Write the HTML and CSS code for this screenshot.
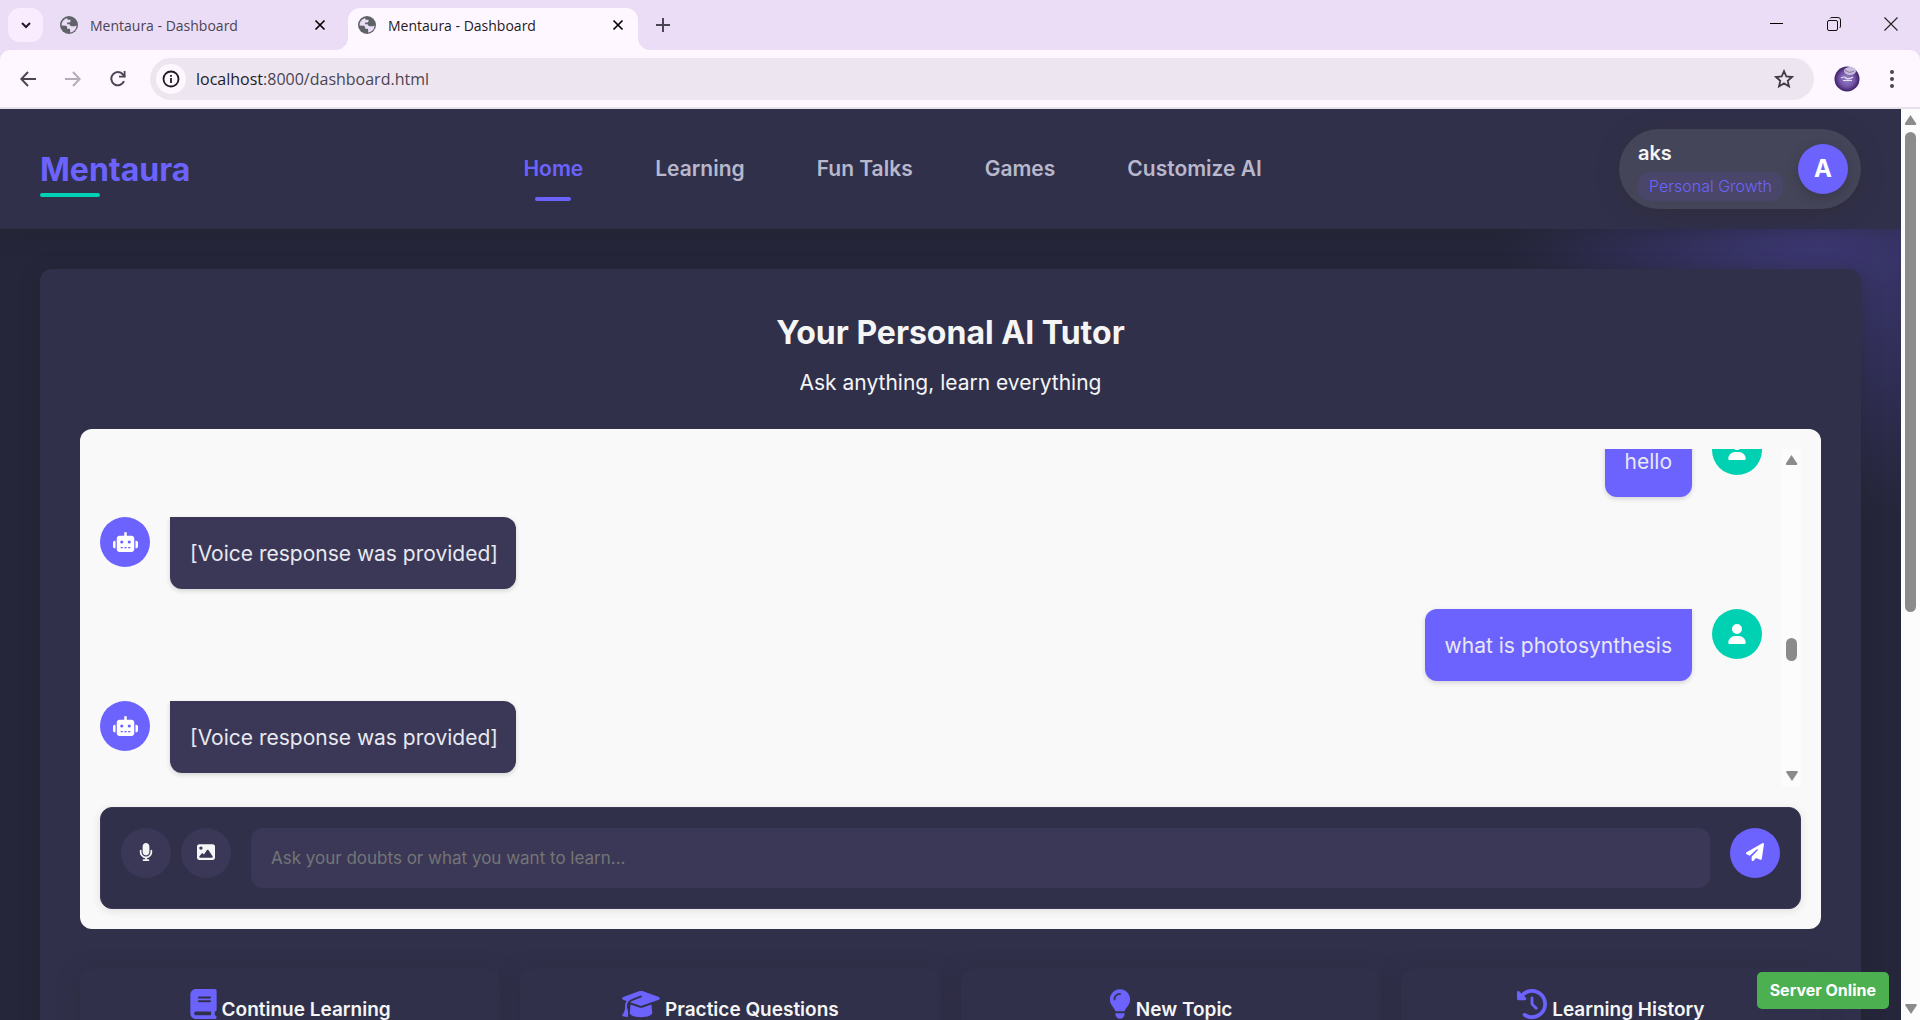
FILE: index.html
```html
<!DOCTYPE html>
<html lang="en">
<head>
<meta charset="utf-8">
<title>Mentaura - Dashboard</title>
<link rel="stylesheet" href="styles.css">
</head>
<body>
<svg class="sprite" aria-hidden="true">
  <symbol id="globe" viewBox="0 0 24 24"><circle cx="12" cy="12" r="12" fill="#5f6368"/><path fill="#ebddf6" d="M9.500 2.500C4.500 4 2 8 2 12.500l5.500.5c1.500.2 2 1 2 2.500v1.500h2.500c1 0 1.500.6 1.500 1.500v3.500c5-.8 8.500-4.500 8.500-9.500l-2 1h-4.500c-1.500 0-2.500-1-2.500-2.500H9.500V8.500h2.500c1.500 0 2-.8 2-2V5h-3c-1 0-1.500-1-1.500-2.500z"/></symbol>
  <symbol id="close" viewBox="0 0 12 12"><path d="M1.500 1.500l9 9M10.500 1.500l-9 9" stroke="currentColor" stroke-width="1.700" fill="none"/></symbol>
  <symbol id="robot" viewBox="0 0 640 512"><path fill="currentColor" d="M320 0c17.700 0 32 14.300 32 32V96H472c39.800 0 72 32.200 72 72V440c0 39.800-32.200 72-72 72H168c-39.800 0-72-32.200-72-72V168c0-39.800 32.200-72 72-72H288V32c0-17.700 14.300-32 32-32zM208 384c-8.800 0-16 7.200-16 16s7.200 16 16 16h32c8.800 0 16-7.200 16-16s-7.200-16-16-16H208zm96 0c-8.800 0-16 7.200-16 16s7.200 16 16 16h32c8.800 0 16-7.200 16-16s-7.200-16-16-16H304zm96 0c-8.800 0-16 7.200-16 16s7.200 16 16 16h32c8.800 0 16-7.200 16-16s-7.200-16-16-16H400zM264 256a40 40 0 1 0 -80 0 40 40 0 1 0 80 0zm152 40a40 40 0 1 0 0-80 40 40 0 1 0 0 80zM48 224H64V416H48c-26.500 0-48-21.500-48-48V272c0-26.500 21.500-48 48-48zm544 0c26.500 0 48 21.500 48 48v96c0 26.500-21.500 48-48 48H576V224h16z"/></symbol>
  <symbol id="user" viewBox="0 0 448 512"><path fill="currentColor" d="M224 256A128 128 0 1 0 224 0a128 128 0 1 0 0 256zm-45.700 48C79.800 304 0 383.800 0 482.300C0 498.700 13.300 512 29.700 512H418.300c16.400 0 29.700-13.300 29.700-29.700C448 383.800 368.200 304 269.700 304H178.300z"/></symbol>
</svg>

<div class="tabstrip">
  <button class="tab-search" aria-label="Search tabs"><svg width="12" height="12" viewBox="0 0 12 12"><path d="M2 4l4 4 4-4" fill="none" stroke="#1f1a24" stroke-width="2"/></svg></button>
  <div class="tab"><svg class="favicon"><use href="#globe"/></svg><span>Mentaura - Dashboard</span><button class="tab-close" aria-label="Close tab"><svg width="12" height="12"><use href="#close"/></svg></button></div>
  <div class="tab tab-active"><svg class="favicon"><use href="#globe"/></svg><span>Mentaura - Dashboard</span><button class="tab-close" aria-label="Close tab"><svg width="12" height="12"><use href="#close"/></svg></button></div>
  <button class="new-tab" aria-label="New tab"><svg width="14" height="14" viewBox="0 0 14 14"><path d="M7 0v14M0 7h14" stroke="#4a4453" stroke-width="2"/></svg></button>
  <div class="window-controls">
    <button aria-label="Minimize"><svg width="14" height="14" viewBox="0 0 14 14"><path d="M0 6.500h13" stroke="#000"/></svg></button>
    <button aria-label="Restore"><svg width="14" height="14" viewBox="0 0 14 14" fill="none" stroke="#111"><rect x=".5" y="3.500" width="10" height="10" rx="1.500"/><path d="M3 1.500q.5-1 2-1h6q2.500 0 2.500 2.500v6q0 1.500-1 2"/></svg></button>
    <button aria-label="Close"><svg width="14" height="14" viewBox="0 0 14 14"><path d="M.5.5l13 13M13.500.5L.5 13.500" stroke="#222" stroke-width="1.100"/></svg></button>
  </div>
</div>

<div class="toolbar">
  <button class="tool" aria-label="Back"><svg width="16" height="16" viewBox="0 0 16 16"><path d="M16 8H1.500M8 1L1.300 8 8 15" fill="none" stroke="#4a4453" stroke-width="2"/></svg></button>
  <button class="tool" aria-label="Forward"><svg width="16" height="16" viewBox="0 0 16 16"><path d="M0 8h14.500M8 1l6.700 7L8 15" fill="none" stroke="#b3adb9" stroke-width="2"/></svg></button>
  <button class="tool" aria-label="Reload"><svg width="16" height="16" viewBox="0 0 16 16"><path d="M14 10.200A6.600 6.600 0 1 1 13 3.500L15 6" fill="none" stroke="#4a4453" stroke-width="2"/><path d="M15.500 0v6.500H9V4.700h4.700V0z" fill="#4a4453"/></svg></button>
  <div class="omnibox">
    <button class="site-info" aria-label="Site information"><svg width="18" height="18" viewBox="0 0 18 18"><circle cx="9" cy="9" r="7.500" fill="none" stroke="#1f1a24" stroke-width="1.800"/><path d="M9 8v5M9 5v1.800" stroke="#1f1a24" stroke-width="1.800"/></svg></button>
    <a class="url" href="#">localhost<span>:8000/dashboard.html</span></a>
    <button class="star" aria-label="Bookmark"><svg width="20" height="20" viewBox="0 0 20 20"><path d="M10 2.200l2.300 5.300 5.700.5-4.300 3.800 1.300 5.600-5-3-5 3 1.300-5.600L2 8l5.700-.5z" fill="none" stroke="#3f3a46" stroke-width="1.800"/></svg></button>
  </div>
  <svg class="account" width="26" height="26" viewBox="0 0 26 26"><defs><radialGradient id="acc"><stop offset="0" stop-color="#9a86c8"/><stop offset=".6" stop-color="#7656aa"/><stop offset="1" stop-color="#3c1f66"/></radialGradient></defs><circle cx="13" cy="13" r="12.500" fill="url(#acc)"/><ellipse cx="16" cy="5" rx="6" ry="4" fill="#c9bfdc"/><path d="M11 4q4 4 9 1" stroke="#7d6c9c" fill="none"/><path d="M7 12q3-2 5 0t7-1M9 14.500h9" stroke="#e8e0f4" stroke-width="1.200" fill="none"/></svg>
  <button class="tool menu" aria-label="Menu"><svg width="4" height="18" viewBox="0 0 4 18" fill="#4a4453"><circle cx="2" cy="2" r="2"/><circle cx="2" cy="9" r="2"/><circle cx="2" cy="16" r="2"/></svg></button>
</div>

<div class="viewport">
  <div class="page">
    <header class="header">
      <a class="logo" href="#">Mentaura</a>
      <nav class="nav">
        <a class="active" href="#">Home</a><a href="#">Learning</a><a href="#">Fun Talks</a><a href="#">Games</a><a href="#">Customize AI</a>
      </nav>
      <div class="profile">
        <div class="profile-info"><span class="profile-name">aks</span><span class="profile-tag">Personal Growth</span></div>
        <div class="profile-avatar">A</div>
      </div>
    </header>

    <main class="main">
      <section class="tutor">
        <h1>Your Personal AI Tutor</h1>
        <p class="subtitle">Ask anything, learn everything</p>

        <div class="chat">
          <div class="chat-scroll">
            <div class="messages">
              <div class="message user"><div class="avatar"><svg width="18" height="20"><use href="#user"/></svg></div><div class="bubble">hello</div></div>
              <div class="message bot"><div class="avatar"><svg width="25" height="20"><use href="#robot"/></svg></div><div class="bubble">[Voice response was provided]</div></div>
              <div class="message user"><div class="avatar"><svg width="18" height="20"><use href="#user"/></svg></div><div class="bubble">what is photosynthesis</div></div>
              <div class="message bot"><div class="avatar"><svg width="25" height="20"><use href="#robot"/></svg></div><div class="bubble">[Voice response was provided]</div></div>
            </div>
            <div class="scrollbar chat-bar"><i class="arrow up"></i><i class="thumb"></i><i class="arrow down"></i></div>
          </div>
          <form class="composer">
            <button type="button" class="round" aria-label="Record voice"><svg width="14" height="18" viewBox="0 0 384 512"><path fill="currentColor" d="M192 0C139 0 96 43 96 96V256c0 53 43 96 96 96s96-43 96-96V96c0-53-43-96-96-96zM64 216c0-13.300-10.700-24-24-24s-24 10.700-24 24v40c0 89.100 66.200 162.700 152 174.400V464H120c-13.300 0-24 10.700-24 24s10.700 24 24 24h72 72c13.300 0 24-10.700 24-24s-10.700-24-24-24H216V430.400c85.800-11.700 152-85.300 152-174.400V216c0-13.300-10.700-24-24-24s-24 10.700-24 24v40c0 70.700-57.300 128-128 128s-128-57.300-128-128V216z"/></svg></button>
            <button type="button" class="round" aria-label="Upload image"><svg width="18" height="18" viewBox="0 0 512 512"><path fill="currentColor" d="M0 96C0 60.700 28.700 32 64 32H448c35.300 0 64 28.700 64 64V416c0 35.300-28.700 64-64 64H64c-35.300 0-64-28.700-64-64V96zM323.800 202.500c-4.500-6.600-11.900-10.500-19.800-10.500s-15.400 3.900-19.800 10.500l-87 127.600L170.700 297c-4.600-5.700-11.500-9-18.700-9s-14.200 3.300-18.700 9l-64 80c-5.800 7.200-6.900 17.100-2.900 25.400s12.400 13.600 21.600 13.600h96 32H424c8.900 0 17.100-4.900 21.200-12.800s3.600-17.400-1.400-24.700l-120-176zM112 192a48 48 0 1 0 0-96 48 48 0 1 0 0 96z"/></svg></button>
            <input type="text" aria-label="Question" placeholder="Ask your doubts or what you want to learn...">
            <button type="button" class="round send" aria-label="Send"><svg width="18" height="18" viewBox="0 0 512 512"><path fill="currentColor" d="M498.100 5.600c10.100 7 15.400 19.100 13.500 31.200l-64 416c-1.500 9.700-7.400 18.200-16 23s-18.900 5.400-28 1.600L284 427.700l-68.500 74.100c-8.900 9.700-22.900 12.900-35.200 8.100S160 493.200 160 480V396.400c0-4 1.500-7.800 4.200-10.700L331.800 202.800c5.800-6.300 5.600-16-.4-22s-15.700-6.400-22-.7L106 360.800 17.700 316.600C7.100 311.300 .3 300.700 0 288.900s5.900-22.800 16.100-28.700l448-256c10.700-6.100 23.900-5.500 34 1.400z"/></svg></button>
          </form>
        </div>

        <div class="cards">
          <article class="card"><h2><svg width="27" height="30" viewBox="0 0 448 512"><path fill="#6c63ff" d="M96 0C43 0 0 43 0 96V416c0 53 43 96 96 96H384h32c17.700 0 32-14.300 32-32s-14.300-32-32-32V384c17.700 0 32-14.300 32-32V32c0-17.700-14.300-32-32-32H384 96zm0 384H352v64H96c-17.700 0-32-14.300-32-32s14.300-32 32-32zm32-240c0-8.800 7.200-16 16-16H336c8.800 0 16 7.200 16 16s-7.200 16-16 16H144c-8.800 0-16-7.200-16-16zm16 48H336c8.800 0 16 7.200 16 16s-7.200 16-16 16H144c-8.800 0-16-7.200-16-16s7.200-16 16-16z"/></svg><span>Continue Learning</span></h2></article>
          <article class="card"><h2><svg width="38" height="30" viewBox="0 0 640 512"><path fill="#6c63ff" d="M320 32c-8.100 0-16.100 1.400-23.700 4.100L15.800 137.400C6.300 140.900 0 149.900 0 160s6.300 19.100 15.800 22.600l57.900 20.900C57.300 229.300 48 259.800 48 291.900v28.100c0 28.400-10.800 57.700-22.300 80.800c-6.500 13-13.900 25.800-22.500 37.600C0 442.700-.9 448.300 .9 453.400s6 8.900 11.200 10.200l64 16c4.200 1.100 8.700 .3 12.400-2s6.300-6.100 7.100-10.400c8.600-42.800 4.300-81.200-2.100-108.700C90.300 344.300 86 329.800 80 316.500V291.900c0-30.200 10.200-58.700 27.900-81.500c12.900-15.500 29.600-28 49.200-35.700l157-61.700c8.200-3.200 17.500 .8 20.700 9s-.8 17.500-9 20.700l-157 61.700c-12.400 4.900-23.300 12.400-32.200 21.600l159.600 57.600c7.600 2.700 15.600 4.100 23.700 4.100s16.100-1.400 23.700-4.100L624.200 182.600c9.500-3.400 15.800-12.500 15.800-22.600s-6.300-19.100-15.800-22.600L343.700 36.100C336.100 33.400 328.100 32 320 32zM128 408c0 35.300 86 72 192 72s192-36.700 192-72L496.700 262.600 354.500 314c-11.100 4-22.800 6-34.500 6s-23.500-2-34.500-6L143.300 262.600 128 408z"/></svg><span>Practice Questions</span></h2></article>
          <article class="card"><h2><svg width="22" height="30" viewBox="0 0 384 512"><path fill="#6c63ff" d="M272 384c9.600-31.900 29.500-59.100 49.200-86.200l0 0c5.200-7.100 10.400-14.200 15.400-21.400c19.800-28.500 31.400-63 31.400-100.300C368 78.800 289.200 0 192 0S16 78.800 16 176c0 37.300 11.600 71.900 31.400 100.300c5 7.200 10.200 14.300 15.400 21.400l0 0c19.800 27.100 39.700 54.400 49.200 86.200H272zM192 512c44.200 0 80-35.800 80-80V416H112v16c0 44.200 35.800 80 80 80zM112 176c0 8.800-7.200 16-16 16s-16-7.200-16-16c0-61.900 50.100-112 112-112c8.800 0 16 7.200 16 16s-7.200 16-16 16c-44.200 0-80 35.800-80 80z"/></svg><span>New Topic</span></h2></article>
          <article class="card"><h2><svg width="30" height="30" viewBox="0 0 512 512"><path fill="#6c63ff" d="M75 75L41 41C25.900 25.900 0 36.600 0 57.900V168c0 13.300 10.700 24 24 24H134.100c21.400 0 32.100-25.900 17-41l-30.800-30.800C155 85.500 203 64 256 64c106 0 192 86 192 192s-86 192-192 192c-40.800 0-78.600-12.700-109.700-34.400c-14.500-10.100-34.400-6.600-44.600 7.900s-6.600 34.400 7.900 44.600C151.200 495 201.700 512 256 512c141.400 0 256-114.600 256-256S397.400 0 256 0C185.300 0 121.300 28.700 75 75zm181 53c-13.300 0-24 10.700-24 24V256c0 6.400 2.500 12.500 7 17l72 72c9.400 9.400 24.600 9.400 33.900 0s9.400-24.600 0-33.900l-65-65V152c0-13.300-10.700-24-24-24z"/></svg><span>Learning History</span></h2></article>
        </div>
      </section>
    </main>
    <div class="status">Server Online</div>
  </div>
  <div class="scrollbar page-bar"><i class="arrow up"></i><i class="thumb"></i><i class="arrow down"></i></div>
</div>
</body>
</html>
```
FILE: styles.css
```css
* { box-sizing: border-box; }

body {
  margin: 0;
  height: 100vh;
  display: flex;
  flex-direction: column;
  overflow: hidden;
  background: #ebddf6;
  font-family: Inter, "Open Sans", sans-serif;
}

button { border: 0; padding: 0; background: none; display: flex; align-items: center; justify-content: center; flex: none; }
a { text-decoration: none; color: inherit; }
svg { display: block; flex: none; }
.sprite { position: absolute; width: 0; height: 0; }

/* Browser window */
.tabstrip {
  flex: none;
  height: 50px;
  display: flex;
  align-items: flex-start;
  padding: 8px 0 0 8px;
  font-family: "Open Sans", sans-serif;
  font-size: 14px;
}
.tab-search { width: 35px; height: 34px; border-radius: 12px; background: #f8ecfe; color: #1f1a24; }
.tab {
  width: 290px;
  height: 42px;
  margin-left: 7px;
  padding: 0 14px 8px 10px;
  display: flex;
  align-items: center;
  gap: 12px;
  color: #4a4453;
}
.tab span { flex: 1; white-space: nowrap; }
.tab-active { margin-left: 8px; background: #fef7ff; border-radius: 12px 12px 0 0; color: #1f1a24; position: relative; }
.tab-active::before, .tab-active::after { content: ""; position: absolute; bottom: 0; width: 12px; height: 12px; }
.tab-active::before { left: -12px; background: radial-gradient(circle at 0 0, transparent 12px, #fef7ff 12px); }
.tab-active::after { right: -12px; background: radial-gradient(circle at 100% 0, transparent 12px, #fef7ff 12px); }
.favicon { width: 18px; height: 18px; }
.new-tab { margin: 10px 0 0 18px; }
.window-controls { margin: 9px 22px 0 auto; display: flex; gap: 43px; }

.toolbar {
  flex: none;
  height: 59px;
  display: flex;
  align-items: center;
  padding: 0 8px 0 8px;
  background: #fef7ff;
  border-bottom: 2px solid #e6e0ea;
  border-radius: 10px 10px 0 0;
}
.tool { width: 40px; height: 40px; margin-right: 5px; }
.omnibox {
  flex: 1;
  height: 42px;
  margin-left: 7px;
  padding: 0 20px 0 6px;
  display: flex;
  align-items: center;
  background: #ede6f1;
  border-radius: 21px;
}
.site-info { width: 30px; height: 30px; border-radius: 50%; background: #fef7ff; }
.url { flex: 1; margin-left: 10px; font: 16px "Open Sans", sans-serif; color: #1f1a24; }
.url span { color: #4a4453; }
.account { margin: 0 12px 0 20px; }
.menu { margin: 0; }

/* Page */
.viewport { flex: 1; min-height: 0; display: flex; }
.page {
  flex: 1;
  position: relative;
  overflow: hidden;
  color: #f5f5f5;
  background: radial-gradient(circle at calc(100% - 82px) 90px, #3f3a7a 0, #25263a 320px);
}
.header {
  height: 120px;
  padding: 0 40px;
  display: flex;
  align-items: center;
  justify-content: space-between;
  background: #31304b;
  box-shadow: 0 4px 20px rgba(32, 32, 32, 0.3);
}
.logo { position: relative; font-size: 32px; font-weight: 700; color: #6c63ff; }
.logo::after { content: ""; position: absolute; left: 0; bottom: -8px; width: 40%; height: 4px; border-radius: 2px; background: #00d1b2; }
.nav { display: flex; gap: 72px; margin-right: 24px; font-size: 21px; line-height: 24px; font-weight: 600; color: #b8b8cc; }
.nav a { position: relative; white-space: nowrap; }
.nav .active { color: #6c63ff; }
.nav .active::after { content: ""; position: absolute; left: 20%; bottom: -20px; width: 60%; height: 4px; border-radius: 2px; background: #6c63ff; }
.profile {
  height: 80px;
  padding: 0 13px 0 19px;
  display: flex;
  align-items: center;
  gap: 15px;
  background: #45455a;
  border-radius: 40px;
  box-shadow: 0 4px 20px rgba(45, 45, 50, 0.6);
}
.profile-info { display: flex; flex-direction: column; align-items: flex-start; gap: 6px; padding-top: 2px; }
.profile-name { font-size: 20px; line-height: 26px; font-weight: 600; }
.profile-tag { padding: 0 11px; line-height: 29px; border-radius: 12px; background: #49466a; color: #6c63ff; font-size: 16px; font-weight: 300; }
.profile-avatar { width: 50px; height: 50px; border-radius: 50%; background: #6c63ff; color: #fff; font-size: 24px; line-height: 50px; font-weight: 700; text-align: center; box-shadow: 0 4px 12px rgba(40, 40, 50, 0.4); }

.main { padding: 40px; }
.tutor { padding: 40px; background: #31304b; border-radius: 12px; box-shadow: 0 4px 20px rgba(32, 32, 32, 0.4); }
h1 { margin: 0; font-size: 32px; line-height: 48px; font-weight: 700; text-align: center; }
.subtitle { margin: 10px 0 30px; font-size: 21px; line-height: 32px; text-align: center; }

.chat { height: 500px; padding: 20px; display: flex; flex-direction: column; gap: 20px; background: #f9f9f9; border-radius: 12px; }
.chat-scroll { flex: 1; min-height: 0; display: flex; }
.messages { flex: 1; padding: 0 20px 14px 0; display: flex; flex-direction: column; justify-content: flex-end; gap: 20px; overflow: hidden; }
.message { display: flex; gap: 20px; flex: none; }
.message.user { flex-direction: row-reverse; }
.avatar { width: 50px; height: 50px; border-radius: 50%; background: #6c63ff; color: #fff; display: flex; align-items: center; justify-content: center; }
.user .avatar { background: #00d1b2; }
.bubble { padding: 21px 18px 19px 20px; font-size: 21px; line-height: 32px; color: #e8e8f0; background: #3b3857; border-radius: 0 12px 12px 12px; box-shadow: 0 2px 5px rgba(0, 0, 0, 0.15); }
.user .bubble { padding: 21px 20px 19px; background: #6c63ff; border-radius: 12px 0 12px 12px; }

.composer { padding: 20px; display: flex; align-items: flex-start; gap: 10px; background: #31304b; border: 1px solid #3b3857; border-radius: 12px; box-shadow: 0 2px 10px rgba(0, 0, 0, 0.1); }
.round { width: 50px; height: 50px; padding-bottom: 2px; border-radius: 50%; background: #3b3857; color: #f5f5f5; }
.send { background: #6c63ff; color: #fff; }
.composer input { flex: 1; min-width: 0; height: 60px; margin: 0 10px; padding: 0 20px; border: 0; border-radius: 12px; background: #3b3857; color: #f5f5f5; font: 17px Inter, sans-serif; }
.composer input::placeholder { color: #757575; }

.cards { margin-top: 40px; display: grid; grid-template-columns: repeat(4, 1fr); gap: 20px; }
.card { height: 160px; padding: 20px; background: #31304b; border-radius: 12px; box-shadow: 0 4px 20px rgba(40, 40, 50, 0.5); }
.card h2 { margin: 0; display: flex; justify-content: center; gap: 5px; font-size: 19px; line-height: 42px; font-weight: 600; }

.status { position: absolute; right: 12px; bottom: 11px; padding: 0 13px; font-size: 16px; line-height: 37px; font-weight: 700; color: #fff; background: #4caf50; border-radius: 5px; }

.scrollbar { flex: none; width: 19px; padding: 6px 0; display: flex; flex-direction: column; align-items: center; background: #fcfcfc; }
.thumb { width: 11px; border-radius: 6px; background: #8b8b8b; }
.arrow { width: 12px; height: 10px; background: #8b8b8b; clip-path: polygon(50% 0, 100% 90%, 92% 100%, 8% 100%, 0 90%); }
.down { margin-top: auto; transform: rotate(180deg); }
.page-bar .thumb { height: 480px; margin-top: 7px; }
.chat-bar .thumb { height: 23px; margin-top: 173px; }
```
